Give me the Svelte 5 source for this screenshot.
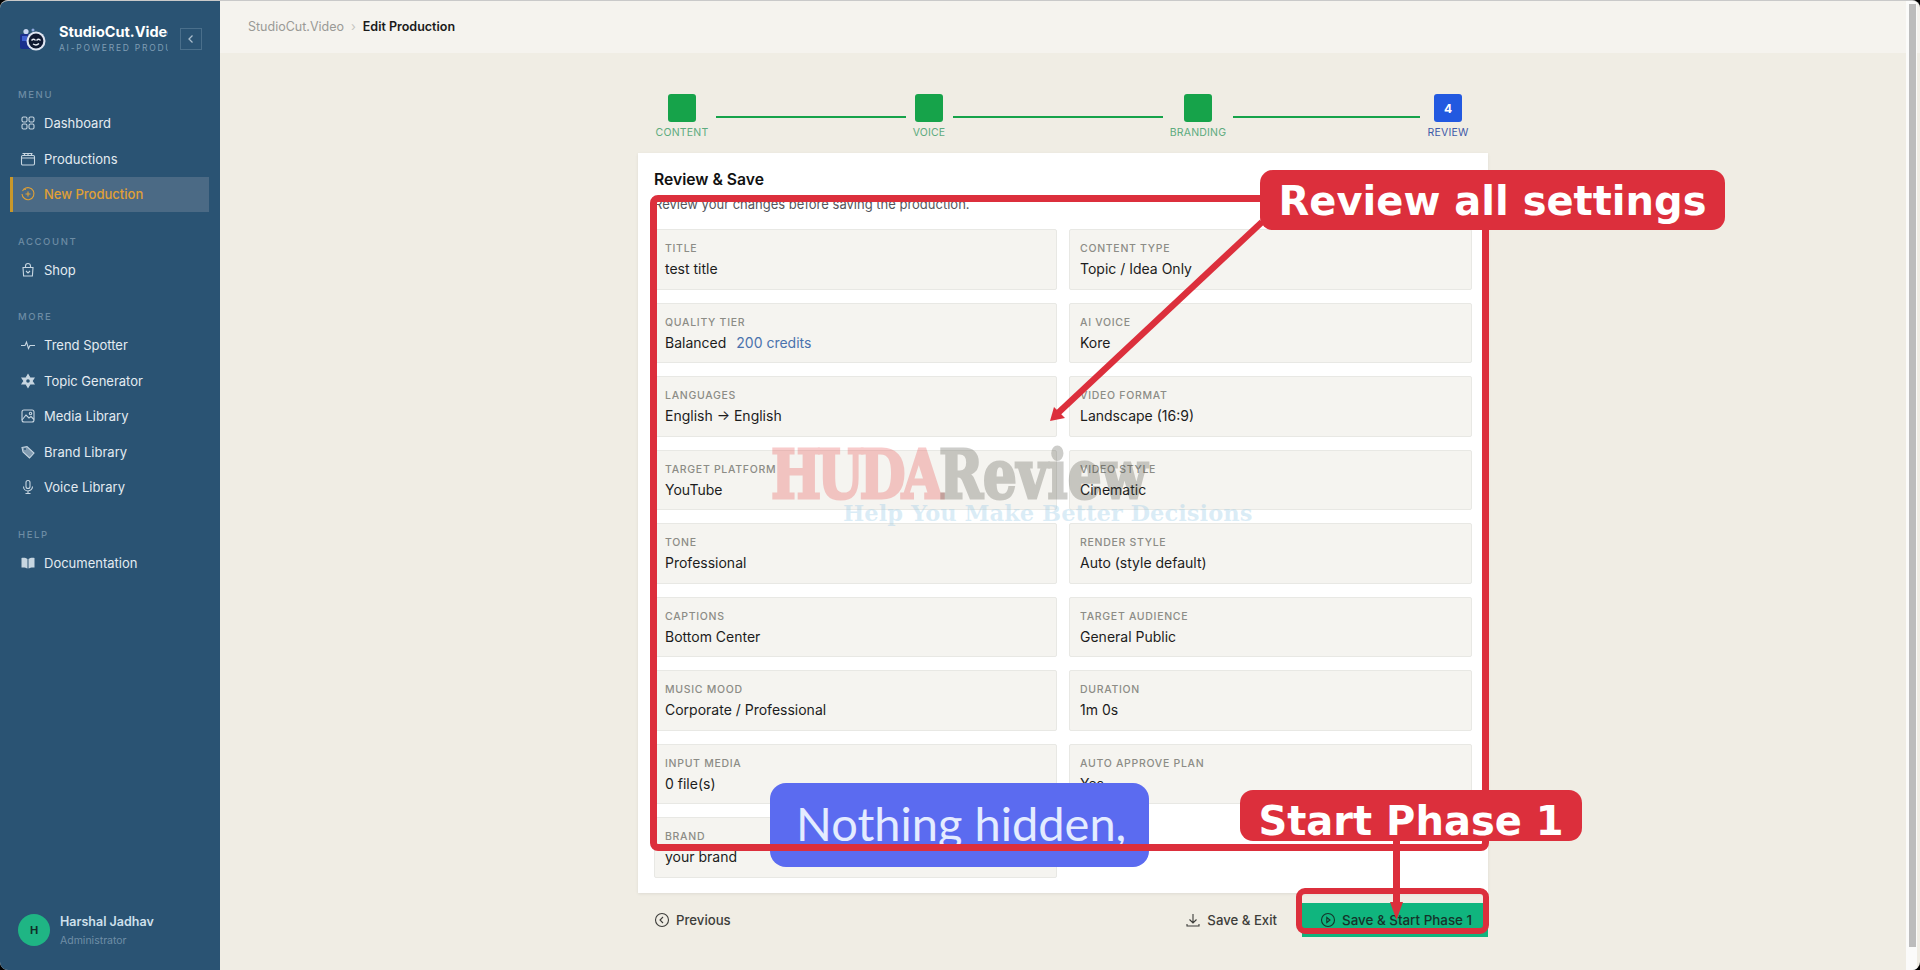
<script>
  const menu = [
    { title: 'MENU', items: [
      { name: 'Dashboard', icon: 'grid' },
      { name: 'Productions', icon: 'clapper' },
      { name: 'New Production', icon: 'plus', active: true }
    ] },
    { title: 'ACCOUNT', items: [{ name: 'Shop', icon: 'bag' }] },
    { title: 'MORE', items: [
      { name: 'Trend Spotter', icon: 'pulse' },
      { name: 'Topic Generator', icon: 'star' },
      { name: 'Media Library', icon: 'image' },
      { name: 'Brand Library', icon: 'tag' },
      { name: 'Voice Library', icon: 'mic' }
    ] },
    { title: 'HELP', items: [{ name: 'Documentation', icon: 'book' }] }
  ];

  const steps = [
    { label: 'CONTENT', width: 50, line: [9, 190, 9] },
    { label: 'VOICE', width: 28, line: [10, 210, 21] },
    { label: 'BRANDING', width: 28, line: [21, 187, 14] },
    { label: 'REVIEW', width: 28, current: true, text: '4' }
  ];

  const fields = [
    ['TITLE', 'test title'],
    ['CONTENT TYPE', 'Topic / Idea Only'],
    ['QUALITY TIER', 'Balanced', '200 credits'],
    ['AI VOICE', 'Kore'],
    ['LANGUAGES', 'English → English'],
    ['VIDEO FORMAT', 'Landscape (16:9)'],
    ['TARGET PLATFORM', 'YouTube'],
    ['VIDEO STYLE', 'Cinematic'],
    ['TONE', 'Professional'],
    ['RENDER STYLE', 'Auto (style default)'],
    ['CAPTIONS', 'Bottom Center'],
    ['TARGET AUDIENCE', 'General Public'],
    ['MUSIC MOOD', 'Corporate / Professional'],
    ['DURATION', '1m 0s'],
    ['INPUT MEDIA', '0 file(s)'],
    ['AUTO APPROVE PLAN', 'Yes'],
    ['BRAND', 'your brand']
  ];
</script>

<div class="page">
  <aside class="sidebar">
    <div class="brand">
      <svg class="logo" viewBox="0 0 28 24" width="28" height="24">
        <rect x="1" y="7" width="15" height="15" rx="2" fill="#1a2f8c" />
        <rect x="3" y="9" width="5" height="5" fill="#3f5fd0" />
        <circle cx="7" cy="4.5" r="2.6" fill="#c9d6f2" />
        <circle cx="14" cy="3" r="1.5" fill="#8fa8de" />
        <circle cx="17" cy="14" r="9.5" fill="#dfe5f2" />
        <circle cx="17" cy="14" r="7.4" fill="#0f1830" />
        <path d="M12.5 13.5c1.5-1.6 3-1.6 4 0M17.5 13.5c1.5-1.6 3-1.6 4 0M14 17c2 1.2 4.5 1 6-.4" stroke="#e9edf5" stroke-width="1.4" fill="none" />
      </svg>
      <div class="brand-text">
        <div class="brand-name">StudioCut.Video</div>
        <div class="brand-sub">AI-POWERED PRODUCTION</div>
      </div>
      <div class="collapse">
        <svg viewBox="0 0 12 12" width="12" height="12"><path d="M7.5 2.5 4 6l3.5 3.5" stroke="#a9bccb" stroke-width="1.3" fill="none" /></svg>
      </div>
    </div>

    {#each menu as group}
      <div class="group">
        <div class="group-title">{group.title}</div>
        {#each group.items as item}
          <div class="nav-item" class:active={item.active}>
            <svg class="nav-icon" viewBox="0 0 16 16" width="16" height="16" fill="none" stroke="currentColor" stroke-width="1.1">
              {#if item.icon === 'grid'}
                <rect x="2" y="2" width="5" height="5" rx="1.4" /><rect x="9" y="2" width="5" height="5" rx="1.4" />
                <rect x="2" y="9" width="5" height="5" rx="1.4" /><rect x="9" y="9" width="5" height="5" rx="1.4" />
              {:else if item.icon === 'clapper'}
                <rect x="1.5" y="4.5" width="13" height="9.5" rx="1.2" /><path d="M1.5 7h13M4 2.5l1 2M7.5 2.5l1 2M11 2.5l1 2M2.5 2.5h10" />
              {:else if item.icon === 'plus'}
                <path d="M4 3.2A6 6 0 1 1 2 8" /><path d="M8 5.5v5M5.5 8h5" /><path d="M2.5 5 4 3l2 .5" />
              {:else if item.icon === 'bag'}
                <path d="M3 5.5h10l-.6 8.5H3.6z" /><path d="M5.5 5.5V4a2.5 2.5 0 0 1 5 0v1.5" /><path d="M6 9l2 2 2-2" />
              {:else if item.icon === 'pulse'}
                <path d="M1 8.5h4l1.5-3.5 2 6.5 1.5-3h5" />
              {:else if item.icon === 'star'}
                <path d="M8 1.5 10 5h4l-2 3 2 3h-4l-2 3.5L6 11H2l2-3-2-3h4z" fill="currentColor" /><circle cx="8" cy="8" r="1.8" fill="#2a5373" stroke="none" />
              {:else if item.icon === 'image'}
                <rect x="2" y="2" width="12" height="12" rx="2" /><path d="M2 12l4-5 3 3 2-1.5 3 3" /><circle cx="10.5" cy="5.5" r="1.2" />
              {:else if item.icon === 'tag'}
                <path d="M2 3.5 7 2.5l7 6.5-4.5 5L3 8z" fill="currentColor" fill-opacity=".55" /><circle cx="5" cy="5" r="1" fill="#2a5373" stroke="none" />
              {:else if item.icon === 'mic'}
                <rect x="6" y="1.5" width="4" height="8" rx="2" /><path d="M3.5 7.5a4.5 4.5 0 0 0 9 0M8 12v2.5M5.5 14.5h5" />
              {:else if item.icon === 'book'}
                <path d="M1.5 3c2.5-.4 4.6 0 6 1v9.5c-1.4-.9-3.5-1.3-6-1zM14.5 3c-2.5-.4-4.6 0-6 1v9.5c1.4-.9 3.5-1.3 6-1z" fill="currentColor" stroke="none" />
              {/if}
            </svg>
            <span>{item.name}</span>
          </div>
        {/each}
      </div>
    {/each}

    <div class="user">
      <div class="avatar">H</div>
      <div>
        <div class="user-name">Harshal Jadhav</div>
        <div class="user-role">Administrator</div>
      </div>
    </div>
  </aside>

  <main class="main">
    <header class="topbar">
      <span class="crumb">StudioCut.Video</span>
      <span class="crumb-sep">›</span>
      <span class="crumb-now">Edit Production</span>
    </header>

    <div class="content">
      <div class="stepper">
        {#each steps as step}
          <div class="step" style="width: {step.width}px">
            <div class="step-box" class:current={step.current}>{step.text ?? ''}</div>
            <div class="step-label" class:current={step.current}>{step.label}</div>
          </div>
          {#if step.line}
            <div class="step-line" style="margin-left: {step.line[0]}px; width: {step.line[1]}px; margin-right: {step.line[2]}px"></div>
          {/if}
        {/each}
      </div>

      <section class="card">
        <h2>Review &amp; Save</h2>
        <p class="sub">Review your changes before saving the production.</p>
        <div class="fields">
          {#each fields as f}
            <div class="field">
              <div class="field-label">{f[0]}</div>
              <div class="field-value">{f[1]}{#if f[2]}<span class="credits">{f[2]}</span>{/if}</div>
            </div>
          {/each}
        </div>
      </section>

      <div class="actions">
        <button class="ghost">
          <svg viewBox="0 0 16 16" width="16" height="16" fill="none" stroke="currentColor" stroke-width="1.1"><circle cx="8" cy="8" r="6.5" /><path d="M9 5 6 8l3 3" /></svg>
          Previous
        </button>
        <div class="actions-right">
          <button class="ghost exit">
            <svg viewBox="0 0 16 16" width="16" height="16" fill="none" stroke="currentColor" stroke-width="1.1"><path d="M8 2v9M4.5 7.5 8 11l3.5-3.5M2 12v2h12v-2" /></svg>
            Save &amp; Exit
          </button>
          <button class="primary">
            <svg viewBox="0 0 16 16" width="16" height="16" fill="none" stroke="currentColor" stroke-width="1.1"><circle cx="8" cy="8" r="6.5" /><path d="M6.8 5.5 10 8l-3.2 2.5z" /></svg>
            Save &amp; Start Phase 1
          </button>
        </div>
      </div>
    </div>
  </main>

  <div class="scroll-track"><div class="scroll-thumb"></div></div>

  <!-- tutorial annotations drawn on top of the app -->
  <div class="wm wm-main"><span class="wm-red">HUDA</span><span class="wm-grey">Review</span></div>
  <div class="wm wm-sub">Help You Make Better Decisions</div>

  <div class="caption">Nothing hidden,</div>
  <div class="mark mark-fields"></div>
  <div class="mark mark-button"></div>
  <svg class="arrows" width="1920" height="970" viewBox="0 0 1920 970">
    <path d="M1262 222 1058 413" stroke="#dc2f3c" stroke-width="6.5" fill="none" />
    <path d="M1050 421 1054 407 1065 418z" fill="#dc2f3c" />
    <path d="M1396.5 838V905" stroke="#dc2f3c" stroke-width="7" fill="none" />
    <path d="M1396.5 920 1390 902H1403z" fill="#dc2f3c" />
  </svg>
  <div class="tag tag-review">Review all settings</div>
  <div class="tag tag-start">Start Phase 1</div>
</div>

<style>
  :global(body) {
    background: #000;
  }

  .page {
    position: relative;
    display: flex;
    height: 970px;
    width: 1920px;
    overflow: hidden;
    border-radius: 8px;
    border-top: 1px solid #c9c9c9;
    box-sizing: border-box;
    font-family: Inter, "Liberation Sans", sans-serif;
    background: #f0ede4;
  }

  .sidebar {
    position: relative;
    width: 220px;
    flex: none;
    background: #2a5373;
    color: #dfe8ef;
    display: flex;
    flex-direction: column;
  }

  .brand {
    display: flex;
    align-items: center;
    height: 48px;
    padding: 14px 0 0 19px;
    margin-bottom: 26px;
  }

  .logo {
    flex: none;
    margin-right: 12px;
  }

  .brand-text {
    width: 109px;
    overflow: hidden;
    white-space: nowrap;
    margin-top: -2px;
  }

  .brand-name {
    font-size: 14.5px;
    font-weight: 700;
    color: #fff;
    line-height: 18px;
  }

  .brand-sub {
    margin-top: 1px;
    font-size: 8.5px;
    letter-spacing: 1.75px;
    color: #7f9db4;
    line-height: 12px;
  }

  .collapse {
    margin-left: 12px;
    width: 20px;
    height: 20px;
    border: 1px solid #4a6f8b;
    display: flex;
    align-items: center;
    justify-content: center;
  }

  .group {
    margin-bottom: 23.5px;
  }

  .group-title {
    font-size: 9.5px;
    font-weight: 500;
    letter-spacing: 1.6px;
    color: #6d8ca4;
    padding-left: 18px;
    line-height: 12px;
    margin-bottom: 4.5px;
  }

  .nav-item {
    display: flex;
    align-items: center;
    gap: 8px;
    height: 35.5px;
    padding-left: 20px;
    font-size: 13px;
    color: #e3ebf1;
  }

  .nav-icon {
    flex: none;
    color: #c7d6e1;
  }

  .nav-item.active {
    margin: 0 11px 0 10px;
    padding-left: 7px;
    border-left: 3px solid #c9982a;
    background: #4b6a85;
    color: #e0a035;
    font-weight: 500;
  }

  .nav-item.active .nav-icon {
    color: #e0a035;
  }

  .user {
    position: absolute;
    left: 18px;
    bottom: 21px;
    display: flex;
    align-items: center;
    gap: 10px;
  }

  .avatar {
    width: 32px;
    height: 32px;
    border-radius: 50%;
    background: #1fb584;
    color: #10302a;
    font-size: 11px;
    font-weight: 700;
    display: flex;
    align-items: center;
    justify-content: center;
  }

  .user-name {
    font-size: 12.5px;
    font-weight: 600;
    color: #cfe0ec;
    line-height: 18px;
    margin-top: 3px;
  }

  .user-role {
    font-size: 10.5px;
    color: #6f8ea6;
    line-height: 16px;
    margin-top: 2px;
  }

  .main {
    flex: 1;
    min-width: 0;
    display: flex;
    flex-direction: column;
    padding-right: 14px;
  }

  .topbar {
    margin-right: -14px;
    height: 52px;
    flex: none;
    display: flex;
    align-items: center;
    padding-left: 28px;
    padding-bottom: 1px;
    box-sizing: border-box;
    background: #f5f3ee;
    font-size: 12.5px;
    gap: 7px;
  }

  .crumb {
    color: #9a9a96;
  }

  .crumb-sep {
    color: #c4c4bf;
  }

  .crumb-now {
    color: #1a1a1a;
    font-weight: 600;
  }

  .content {
    flex: 1;
    display: flex;
    flex-direction: column;
    align-items: center;
    padding-top: 41px;
  }

  .stepper {
    display: flex;
    align-items: flex-start;
    height: 59px;
    width: 850px;
    box-sizing: border-box;
    padding-left: 19px;
  }

  .step {
    flex: none;
    display: flex;
    flex-direction: column;
    align-items: center;
  }

  .step-box {
    flex: none;
    width: 28px;
    height: 28px;
    border-radius: 3px;
    background: #16a34a;
    color: #fff;
    font-size: 12px;
    font-weight: 700;
    display: flex;
    align-items: center;
    justify-content: center;
  }

  .step-box.current {
    background: #2259e0;
  }

  .step-label {
    font-size: 10.5px;
    color: #5dab7e;
    margin-top: 5px;
    line-height: 12px;
    letter-spacing: 0.2px;
    white-space: nowrap;
  }

  .step-label.current {
    color: #3f5aa8;
  }

  .step-line {
    flex: none;
    height: 2px;
    margin-top: 22px;
    background: #16a34a;
  }

  .card {
    width: 850px;
    box-sizing: border-box;
    height: 740px;
    flex: none;
    background: #fff;
    padding: 17px 16px 16px;
    box-shadow: 0 1px 3px rgba(0, 0, 0, 0.08);
  }

  h2 {
    margin: 0;
    font-size: 15.7px;
    font-weight: 600;
    color: #111;
    line-height: 20px;
  }

  .sub {
    margin: 5px 0 0;
    font-size: 13px;
    color: #55555a;
    line-height: 18px;
    height: 34px;
  }

  .fields {
    display: grid;
    grid-template-columns: 1fr 1fr;
    column-gap: 12px;
    row-gap: 13px;
  }

  .field {
    height: 60.5px;
    box-sizing: border-box;
    padding: 12px 10px 0;
    background: #f5f4f0;
    border: 1px solid #e8e8e4;
    border-radius: 2px;
  }

  .field-label {
    font-size: 10.5px;
    font-weight: 500;
    letter-spacing: 0.7px;
    color: #8c8c86;
    line-height: 14px;
  }

  .field-value {
    margin-top: 4px;
    font-size: 14px;
    color: #1c1c1c;
    line-height: 18px;
  }

  .credits {
    margin-left: 10px;
    color: #4a72ad;
  }

  .actions {
    width: 850px;
    display: flex;
    justify-content: space-between;
    align-items: center;
    margin-top: 10px;
  }

  .actions-right {
    display: flex;
    align-items: center;
  }

  button {
    font: inherit;
    font-size: 13.2px;
    font-weight: 500;
    border: 0;
    background: none;
    display: flex;
    align-items: center;
    gap: 6px;
    height: 34px;
    padding: 0;
  }

  .ghost {
    color: #3d3d3a;
    padding: 0 16px;
  }

  .ghost.exit {
    padding-right: 25px;
  }

  .primary {
    width: 186px;
    padding-left: 18px;
    box-sizing: border-box;
    background: #10b57e;
    color: #15332a;
    font-size: 13.4px;
  }

  .scroll-track {
    position: absolute;
    right: 3px;
    top: 0;
    bottom: 0;
    width: 11px;
    background: #fbfbfa;
  }

  .scroll-thumb {
    margin: 3px 1px 0 3px;
    height: 943px;
    background: #bcbcbc;
  }

  .wm {
    position: absolute;
    pointer-events: none;
    font-family: "DejaVu Serif", serif;
    font-weight: 700;
    white-space: nowrap;
  }

  .wm-main {
    left: 771px;
    top: 438px;
    font-size: 68px;
    line-height: 70px;
    transform: scaleX(0.78);
    transform-origin: left center;
    -webkit-text-stroke: 3px currentColor;
  }

  .wm-red {
    color: #e63c3c;
    opacity: 0.26;
    letter-spacing: -5px;
  }

  .wm-grey {
    color: #3c3c32;
    opacity: 0.25;
  }

  .wm-sub {
    left: 843px;
    top: 498px;
    font-size: 22.6px;
    line-height: 28px;
    color: rgba(150, 200, 230, 0.34);
  }

  .caption {
    position: absolute;
    left: 770px;
    top: 782px;
    width: 379px;
    height: 84px;
    box-sizing: border-box;
    padding: 8px 0 0 26px;
    border-radius: 16px;
    background: #5b6bf0;
    color: #e4ecff;
    font-family: Lato, sans-serif;
    font-size: 47px;
    line-height: 64px;
    white-space: nowrap;
  }

  .mark {
    position: absolute;
    box-sizing: border-box;
    border-style: solid;
    border-color: #dc2f3c;
  }

  .mark-fields {
    left: 650px;
    top: 194px;
    width: 839px;
    height: 656px;
    border-width: 7px;
    border-radius: 8px;
  }

  .mark-button {
    left: 1296px;
    top: 887px;
    width: 193px;
    height: 46px;
    border-width: 6px;
    border-radius: 9px;
  }

  .arrows {
    position: absolute;
    left: 0;
    top: -1px;
    pointer-events: none;
  }

  .tag {
    position: absolute;
    display: flex;
    align-items: center;
    justify-content: center;
    box-sizing: border-box;
    border-radius: 13px;
    background: #dc2f3c;
    color: #fff;
    font-family: "DejaVu Sans", sans-serif;
    font-weight: 700;
    font-size: 40px;
    white-space: nowrap;
  }

  .tag-review {
    left: 1260px;
    top: 169px;
    width: 465px;
    height: 60px;
    padding-top: 2px;
  }

  .tag-start {
    left: 1240px;
    top: 789px;
    width: 342px;
    height: 51px;
    padding-top: 11px;
  }
</style>
